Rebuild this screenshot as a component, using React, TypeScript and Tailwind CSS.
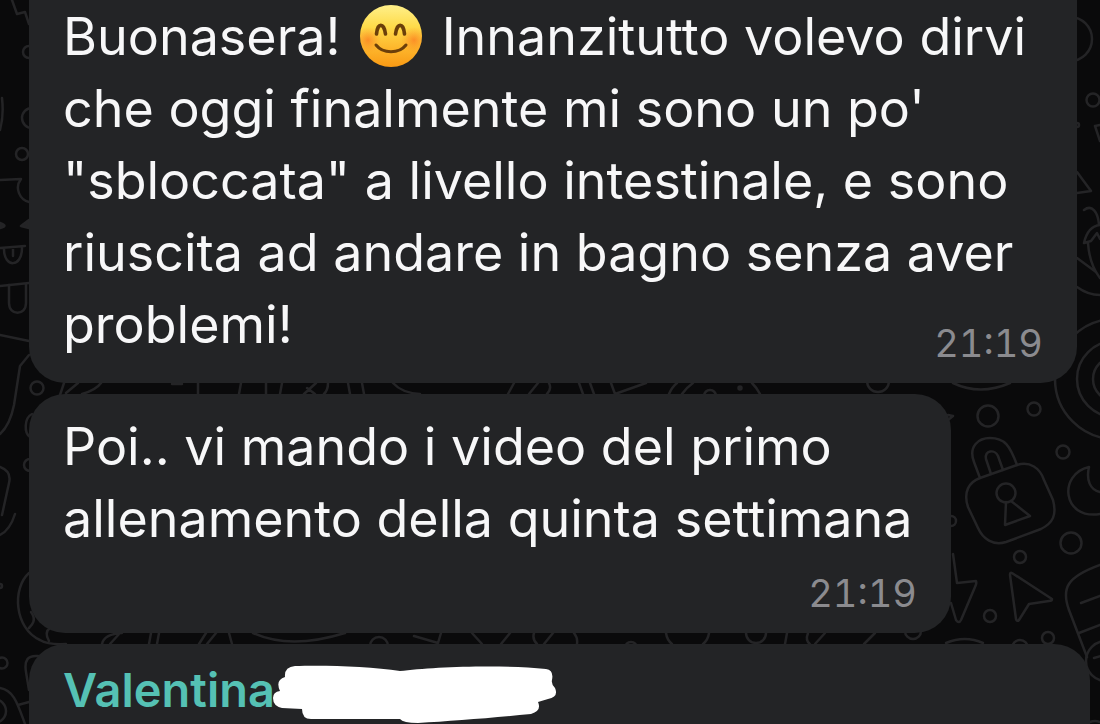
import type { ReactNode } from 'react';

interface Message {
  id: number;
  body: ReactNode;
  time: string;
  bubbleClass: string;
  timeClass: string;
}

function SmilingEmoji() {
  return (
    <svg
      role="img"
      aria-label="faccina sorridente"
      viewBox="0 0 64 64"
      className="mx-1 inline-block h-16 w-16 align-[-13px]"
    >
      <defs>
        <linearGradient id="face" x1="0" y1="0" x2="0" y2="1">
          <stop offset="0" stopColor="#fff08a" />
          <stop offset="0.35" stopColor="#fedb4a" />
          <stop offset="0.7" stopColor="#fdb62c" />
          <stop offset="1" stopColor="#f99a14" />
        </linearGradient>
        <radialGradient id="cheek">
          <stop offset="0" stopColor="#fb6a1c" stopOpacity="0.6" />
          <stop offset="1" stopColor="#fb8a1c" stopOpacity="0" />
        </radialGradient>
        <clipPath id="faceClip">
          <circle cx="32" cy="32" r="31" />
        </clipPath>
      </defs>
      <circle cx="32" cy="32" r="31" fill="url(#face)" />
      <g clipPath="url(#faceClip)">
        <circle cx="9" cy="36" r="13" fill="url(#cheek)" />
        <circle cx="55" cy="36" r="13" fill="url(#cheek)" />
      </g>
      <g fill="none" stroke="#6b3f0a" strokeLinecap="round">
        <path d="M17.5 30C18.5 18.5 25 18.5 26.5 30" strokeWidth="3.6" />
        <path d="M36.5 30C38 18.5 44.5 18.5 45.5 30" strokeWidth="3.6" />
        <path d="M17 41C24 50 40 50 47 41" strokeWidth="3" />
      </g>
    </svg>
  );
}

// Chat wallpaper
function Wallpaper() {
  return (
    <svg
      aria-hidden="true"
      viewBox="0 0 1100 724"
      preserveAspectRatio="xMidYMid slice"
      className="absolute inset-0 h-full w-full"
      fill="none"
      stroke="#242426"
      strokeWidth="2.5"
      strokeLinecap="round"
      strokeLinejoin="round"
    >
      {/* left edge */}
      <path d="M12 0L17 14L25 12L29 24M2 98Q4 116 0 130M0 180L21 179C14 188 20 200 29 202" />
      <circle cx="29" cy="52" r="6" />
      <circle cx="32" cy="118" r="10" />
      <circle cx="22" cy="154" r="6" />
      <path d="M0 223Q9 226 0 228ZM29 220L21 226L29 228Z" fill="#242426" />
      <path d="M0 248L25 246M4 249C4 268 22 268 22 248M13 249V256" />
      <path d="M0 286L29 283M9 285V303C9 316 26 316 26 303V284M0 335L29 341" />
      <path d="M29 355L20 366L14 405Q10 425 0 434" />
      <circle cx="37" cy="388" r="6.5" />
      <path d="M32 414C24 418 24 433 30 437" />
      <circle cx="30" cy="465" r="6" />
      <path d="M0 467C8 470 11 475 9 483L2 515M15 514Q10 530 0 535" />
      <circle cx="0" cy="586" r="2" />
      <path d="M29 573C12 588 14 628 40 640Q48 645 66 644M31 612C37 620 32 625 29 628M50 628Q44 632 49 641" />
      <circle cx="2" cy="663" r="5.5" />
      <circle cx="-6" cy="711" r="12" />
      <path d="M38 656C28 655 24 660 26 672L29 690M0 688C14 690 18 705 25 724M18 705L29 702" />

      {/* between the first and second bubble */}
      <path d="M64 383L60 395M78 383L66 393M101 383Q96 390 82 394M172 384H182M198 383V394M241 383L239 394M266 383V394M282 383L280 394" />
      <path d="M316 383L304 394M307 388L315 394M328 383Q328 390 324 394M348 383L350 394M362 383L364 394M393 383Q402 393 420 394M514 383L508 394M538 383L529 394M549 383Q552 389 547 394" />
      <path d="M579 383L583 394M590 383L594 394M611 383L615 394L646 383M677 383Q672 387 669 394M693 383Q686 388 682 394M752 383Q757 388 760 394M953 383Q980 396 1010 383" />
      <circle cx="710" cy="396" r="6" />
      <circle cx="740" cy="388" r="1.5" fill="#242426" />
      <circle cx="878" cy="381" r="11" />

      {/* between the second and third bubble */}
      <path d="M122 633Q104 634 102 644M120 633L110 644M151 633L149 644M159 633L157 644M206 633L199 644M216 633L207 644M229 633L232 644M253 633Q290 650 345 633" />
      <path d="M414 636L438 643L441 633M472 633L482 644M510 633L501 644M534 633Q532 639 537 644M553 633L544 644M574 633Q578 638 577 644M666 633Q667 640 672 644M709 633Q708 640 703 644M787 633L785 644" />
      <path d="M808 633Q805 641 810 644M825 633L815 644M875 633L864 644M946 643Q965 635 983 643" />
      <circle cx="379" cy="646" r="9" />
      <circle cx="631" cy="648" r="6" />
      <circle cx="756" cy="633" r="10" />
      <circle cx="913" cy="631" r="8" />
      <circle cx="1020" cy="648" r="8" />

      {/* right edge */}
      <circle cx="1070" cy="39" r="22" />
      <circle cx="1093" cy="100" r="6.5" />
      <circle cx="1077" cy="125" r="2" />
      <path d="M1100 125L1095 126L1100 141M1077 172L1091 191L1077 193" />
      <path d="M1084 210C1092 204 1098 212 1099 225M1100 225C1090 226 1086 234 1084 243L1091 241L1097 233L1100 239M1088 243C1089 258 1093 269 1100 278M1077 258L1096 272M1077 287Q1088 295 1100 295" />
      <circle cx="1115" cy="379" r="60" />
      <circle cx="1115" cy="379" r="38" />
      <circle cx="1115" cy="379" r="22" />

      {/* padlock */}
      <path d="M980 478L1017 465C1030 461 1040 468 1044 480L1053 500C1057 515 1053 523 1041 529L1006 542C993 546 983 539 978 528L968 507C963 492 969 482 980 478Z" />
      <path d="M980 478L974 462C968 446 979 438 990 438C1005 438 1010 446 1017 465" />
      <path d="M991 474L986 459C984 450 995 449 998 456L1003 470" />
      <circle cx="1006" cy="493" r="9.5" />
      <path d="M1006 502L1005 525L1030 516L1011 501" />

      {/* moon, bolt, cursor, mitten */}
      <path d="M1100 514C1062 520 1058 474 1089 467C1086 480 1090 490 1100 492" />
      <path d="M953 554L957 583L976 581Q977 583 975 587L961 620Q959 624 956 620L951 603" />
      <path d="M1012 573L1052 599Q1052 601 1049 601L1029 604L1019 620Q1017 622 1016 619L1010 575Q1010 572 1012 573Z" />
      <path d="M1100 565C1067 577 1061 588 1069 610L1087 657M1081 603L1100 596M1079 633L1100 625M1094 658L1101 656" />
      <circle cx="1106" cy="661" r="20" />
      <circle cx="988" cy="416" r="10.5" />
      <circle cx="1034" cy="409" r="6.5" />
      <circle cx="1063" cy="452" r="6.5" />
      <circle cx="1071" cy="543" r="10.5" />
      <circle cx="1020" cy="557" r="6" />
      <circle cx="990" cy="616" r="6" />
      <circle cx="1048" cy="638" r="6" />
      <circle cx="951" cy="521" r="5" />
      <path d="M948 415L953 416L948 420M1090 722Q1095 720 1100 722" />
    </svg>
  );
}

// White marker stroke covering the surname
function Scribble() {
  return (
    <svg aria-hidden="true" viewBox="270 660 290 64" className="-ml-1 h-16 w-[290px] shrink-0">
      <path
        fill="#fff"
        d="M294 666C320 665 370 666 399 671C430 667 500 664 545 669Q553 670 551 680Q550 684 554 688Q558 697 547 699L537 702Q541 711 530 714C490 718 450 721 417 723Q402 723 399 719L310 719Q301 719 301 709L281 708Q272 706 272 698Q272 692 279 691Q274 680 284 677Q283 667 294 666Z"
      />
    </svg>
  );
}

const messages: Message[] = [
  {
    id: 1,
    body: (
      <>
        <span>Buonasera!</span> <SmilingEmoji /> <span>Innanzitutto volevo dirvi</span>{' '}
        <span>
          che oggi finalmente mi sono un po' "sbloccata" a livello intestinale, e sono riuscita ad
          andare in bagno senza aver
        </span>{' '}
        <span>problemi!</span>
      </>
    ),
    time: '21:19',
    bubbleClass: 'mr-[23px] rounded-b-[36px] pt-px',
    timeClass: 'mt-[30px]',
  },
  {
    id: 2,
    body: 'Poi.. vi mando i video del primo allenamento della quinta settimana',
    time: '21:19',
    bubbleClass: 'mr-[149px] rounded-[36px] pt-[17px]',
    timeClass: 'mt-[14px]',
  },
];

export default function App() {
  return (
    <main
      lang="it"
      className="relative flex min-h-screen flex-col overflow-hidden bg-[#0a0a0b] font-['Inter',sans-serif]"
    >
      <Wallpaper />

      <div className="relative flex flex-1 flex-col gap-[11px] pl-[29px]">
        {messages.map(message => (
          <article
            key={message.id}
            className={`bg-[#232426] pr-[30px] pb-4 pl-[34px] ${message.bubbleClass}`}
          >
            {/* The time floats beside the last line, or below it when there is no room */}
            <p className="flow-root text-[52px] leading-[72px] text-[#f7f7f8]">
              {message.body}
              <time
                className={`float-right mr-1 text-[38px] leading-[48px] text-[#8b8b8f] tabular-nums ${message.timeClass}`}
              >
                {message.time}
              </time>
            </p>
          </article>
        ))}

        {/* Next message, cut off by the bottom of the screen */}
        <article className="mr-[10px] flex flex-1 items-start rounded-t-[36px] bg-[#232426] pt-4 pl-[34px]">
          <h2 className="text-[47px] leading-[60px] font-semibold text-[#55c1b4]">Valentina</h2>
          <Scribble />
        </article>
      </div>
    </main>
  );
}
